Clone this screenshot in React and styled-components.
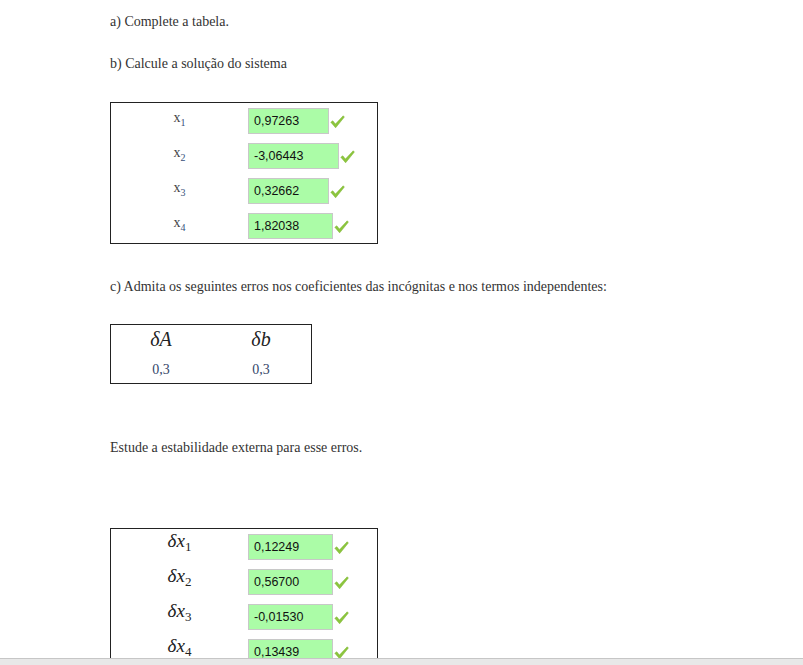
import React from "react";
import styled, { createGlobalStyle } from "styled-components";

const GlobalStyle = createGlobalStyle`
  html, body {
    margin: 0;
    padding: 0;
    background: #ffffff;
    overflow: hidden;
  }
  body {
    font-family: "Liberation Serif", "DejaVu Serif", serif;
  }
`;

const Page = styled.div`
  padding: 12px 0 0 110px;
  height: 665px;
  box-sizing: border-box;
`;

const Para = styled.p`
  margin: 0 0 ${(p) => p.$after}px 0;
  height: 20px;
  line-height: 20px;
  font-size: 14px;
  color: #333;
  white-space: nowrap;
`;

const AnswerTable = styled.div`
  width: 268px;
  box-sizing: border-box;
  border: 1px solid #222;
  margin-bottom: ${(p) => p.$after || 0}px;
`;

const AnswerRow = styled.div`
  display: grid;
  grid-template-columns: 137px auto;
  align-items: center;
  height: 35px;
`;

const VarLabel = styled.div`
  text-align: center;
  font-family: "Liberation Serif", serif;
  font-size: 14px;
  color: #444;
  padding-bottom: 3px;

  sub {
    font-size: 10px;
    color: #36507a;
    vertical-align: -4px;
  }
`;

const MathLabel = styled.div`
  text-align: center;
  font-family: "Liberation Serif", "DejaVu Serif", serif;
  font-style: italic;
  font-size: 19px;
  color: #222;
  padding-bottom: 8px;

  sub {
    font-style: normal;
    font-size: 13px;
    vertical-align: -4px;
  }
`;

const Field = styled.div`
  display: flex;
  align-items: center;
`;

const Answer = styled.div`
  width: ${(p) => p.$w}px;
  height: 26px;
  box-sizing: border-box;
  border: 1px solid #c8c8c8;
  background: #abfca7;
  padding-left: 5px;
  font-family: "Liberation Sans", Arial, sans-serif;
  font-size: 12.5px;
  color: #111;
  line-height: 24px;
`;

const Check = () => (
  <svg width="15" height="14" viewBox="0 0 15 14" style={{ marginLeft: 1, marginTop: 3 }}>
    <path
      d="M0.8 7.2 L2.8 5.8 L5.4 9.1 L13.2 0.8 L14.4 2 L5.6 12.8 Z"
      fill="#8cc63e"
      stroke="#7ab32c"
      strokeWidth="0.5"
      strokeLinejoin="round"
    />
  </svg>
);

const ErrorTable = styled.div`
  width: 202px;
  height: 60px;
  box-sizing: border-box;
  border: 1px solid #222;
  display: grid;
  grid-template-columns: 100px 100px;
  grid-template-rows: 29px 29px;
  margin-bottom: ${(p) => p.$after}px;
`;

const ErrHead = styled.div`
  text-align: center;
  font-family: "Liberation Serif", serif;
  font-style: italic;
  font-size: 20px;
  line-height: 28px;
  color: #222;
`;

const ErrValue = styled.div`
  text-align: center;
  font-family: "Liberation Serif", serif;
  font-size: 14px;
  line-height: 32px;
  color: #34466a;
`;

const BottomBar = styled.div`
  position: fixed;
  left: 0;
  right: 0;
  bottom: 0;
  height: 6px;
  background: #e8e8e8;
  border-top: 1px solid #c6c6c6;
`;

const first = [
  { n: 1, v: "0,97263", w: 81 },
  { n: 2, v: "-3,06443", w: 91 },
  { n: 3, v: "0,32662", w: 81 },
  { n: 4, v: "1,82038", w: 85 },
];

const second = [
  { n: 1, v: "0,12249" },
  { n: 2, v: "0,56700" },
  { n: 3, v: "-0,01530" },
  { n: 4, v: "0,13439" },
];

export default function App() {
  return (
    <>
      <GlobalStyle />
      <Page>
        <Para $after={22}>a) Complete a tabela.</Para>
        <Para $after={28}>b) Calcule a solução do sistema</Para>

        <AnswerTable $after={33}>
          {first.map((r) => (
            <AnswerRow key={r.n}>
              <VarLabel>
                x<sub>{r.n}</sub>
              </VarLabel>
              <Field>
                <Answer $w={r.w}>{r.v}</Answer>
                <Check />
              </Field>
            </AnswerRow>
          ))}
        </AnswerTable>

        <Para $after={27}>
          c) Admita os seguintes erros nos coeficientes das incógnitas e nos termos independentes:
        </Para>

        <ErrorTable $after={54}>
          <ErrHead>δA</ErrHead>
          <ErrHead>δb</ErrHead>
          <ErrValue>0,3</ErrValue>
          <ErrValue>0,3</ErrValue>
        </ErrorTable>

        <Para $after={70}>Estude a estabilidade externa para esse erros.</Para>

        <AnswerTable>
          {second.map((r) => (
            <AnswerRow key={r.n}>
              <MathLabel>
                δx<sub>{r.n}</sub>
              </MathLabel>
              <Field>
                <Answer $w={85}>{r.v}</Answer>
                <Check />
              </Field>
            </AnswerRow>
          ))}
        </AnswerTable>
      </Page>
      <BottomBar />
    </>
  );
}
